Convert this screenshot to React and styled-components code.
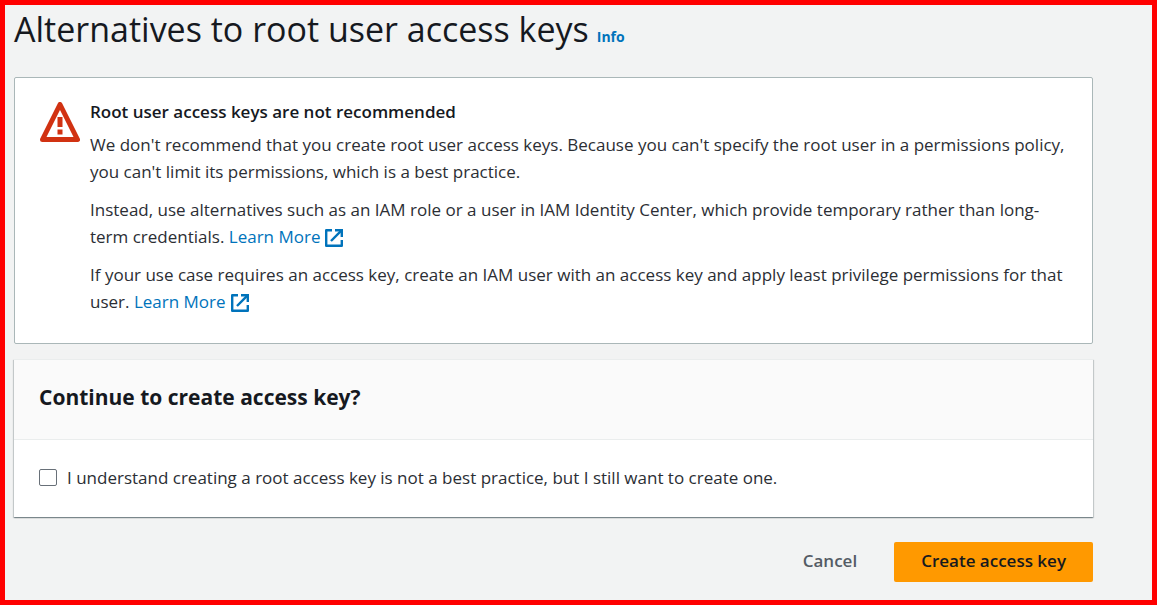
import React from "react";
import styled, { createGlobalStyle } from "styled-components";

const GlobalStyle = createGlobalStyle`
  *, *::before, *::after { box-sizing: border-box; }
  body {
    margin: 0;
    background: #f2f3f3;
    color: #16191f;
    font-family: "Open Sans", "Noto Sans", sans-serif;
    font-size: 17px;
    line-height: 27px;
  }
  h1, h2, h3, p { margin: 0; }
`;

const Page = styled.div`
  min-height: 100vh;
  border: 5px solid #ff0000;
  padding: 0 59px 0 9px;
`;

const PageHeader = styled.header`
  display: flex;
  align-items: baseline;
  gap: 8px;
  padding-bottom: 24px;
`;

const PageTitle = styled.h1`
  font-size: 34px;
  line-height: 48px;
  font-weight: 400;
`;

const Link = styled.a`
  color: #0073bb;
  text-decoration: none;
`;

const InfoLink = styled(Link)`
  font-size: 14px;
  font-weight: 700;
`;

const Alert = styled.section`
  display: flex;
  gap: 10px;
  padding: 20px 20px 28px 25px;
  background: #ffffff;
  border: 1px solid #aab7b8;
  border-radius: 2px;
`;

const WarningIcon = styled.svg`
  flex: none;
  width: 40px;
  height: 40px;
  margin-top: 4px;
`;

const AlertBody = styled.div`
  display: grid;
  gap: 11px;
`;

const AlertTitle = styled.h2`
  font-size: 17px;
  font-weight: 600;
  line-height: 27px;
  margin-bottom: -5px;
`;

const AlertText = styled.p`
  color: #2b2e34;
`;

const ExternalSvg = styled.svg`
  width: 20px;
  height: 20px;
  margin-left: 4px;
  vertical-align: -5px;
`;

const Card = styled.section`
  margin-top: 15px;
  background: #ffffff;
  border-top: 1px solid #eaeded;
  box-shadow: 0 1px 1px 0 rgba(0, 28, 36, 0.3), 1px 1px 1px 0 rgba(0, 28, 36, 0.15),
    -1px 1px 1px 0 rgba(0, 28, 36, 0.15);
`;

const CardHeader = styled.div`
  padding: 21px 25px 26px;
  background: #fafafa;
  border-bottom: 1px solid #eaeded;
`;

const CardTitle = styled.h2`
  font-size: 21px;
  line-height: 32px;
  font-weight: 700;
`;

const CardBody = styled.div`
  padding: 24px 25px 26px;
`;

const CheckLabel = styled.label`
  display: flex;
  align-items: center;
  gap: 10px;
  color: #2b2e34;
`;

const Checkbox = styled.input`
  appearance: none;
  flex: none;
  width: 18px;
  height: 17px;
  margin: 0;
  background: #ffffff;
  border: 1px solid #687078;
  border-radius: 2px;
  &:checked { background: #0073bb; }
`;

const Actions = styled.div`
  display: flex;
  justify-content: flex-end;
  gap: 10px;
  padding: 25px 0 18px;
`;

const Button = styled.button`
  height: 40px;
  padding: 0 27px 3px;
  border: 0;
  border-radius: 2px;
  background: ${(p) => (p.$primary ? "#ff9900" : "transparent")};
  color: ${(p) => (p.$primary ? "#16191f" : "#545b64")};
  font: inherit;
  font-weight: 600;
  line-height: 27px;
  cursor: pointer;
`;

function ExternalIcon() {
  return (
    <ExternalSvg viewBox="0 0 20 20" fill="none" stroke="currentColor" strokeWidth="2.4" aria-hidden="true">
      <path d="M8 2.2H2.2V17.8H17.8V12" strokeLinejoin="round" />
      <path d="M11 2.2H17.8V9" />
      <path d="M17.8 2.2L7 13" />
    </ExternalSvg>
  );
}

function LearnMore() {
  return (
    <Link href="#learn-more">
      Learn More
      <ExternalIcon />
    </Link>
  );
}

export default function App() {
  return (
    <>
      <GlobalStyle />
      <Page>
        <PageHeader>
          <PageTitle>Alternatives to root user access keys</PageTitle>
          <InfoLink href="#info">Info</InfoLink>
        </PageHeader>
        <main>
          <Alert>
            <WarningIcon viewBox="0 0 40 40" fill="none" aria-hidden="true">
              <path d="M20 2.5L37.5 37.5H2.5Z" stroke="#d13212" strokeWidth="5" strokeLinejoin="round" />
              <path d="M20 15V25M20 27.5V32.5" stroke="#d13212" strokeWidth="5" />
            </WarningIcon>
            <AlertBody>
              <AlertTitle>Root user access keys are not recommended</AlertTitle>
              <AlertText>
                We don't recommend that you create root user access keys. Because you can't specify the root user in a
                permissions policy, you can't limit its permissions, which is a best practice.
              </AlertText>
              <AlertText>
                Instead, use alternatives such as an IAM role or a user in IAM Identity Center, which provide temporary
                rather than long-term credentials. <LearnMore />
              </AlertText>
              <AlertText>
                If your use case requires an access key, create an IAM user with an access key and apply least
                privilege permissions for that user. <LearnMore />
              </AlertText>
            </AlertBody>
          </Alert>
          <Card>
            <CardHeader>
              <CardTitle>Continue to create access key?</CardTitle>
            </CardHeader>
            <CardBody>
              <CheckLabel htmlFor="understand">
                <Checkbox type="checkbox" id="understand" />
                I understand creating a root access key is not a best practice, but I still want to create one.
              </CheckLabel>
            </CardBody>
          </Card>
          <Actions>
            <Button type="button">Cancel</Button>
            <Button type="button" $primary>
              Create access key
            </Button>
          </Actions>
        </main>
      </Page>
    </>
  );
}
